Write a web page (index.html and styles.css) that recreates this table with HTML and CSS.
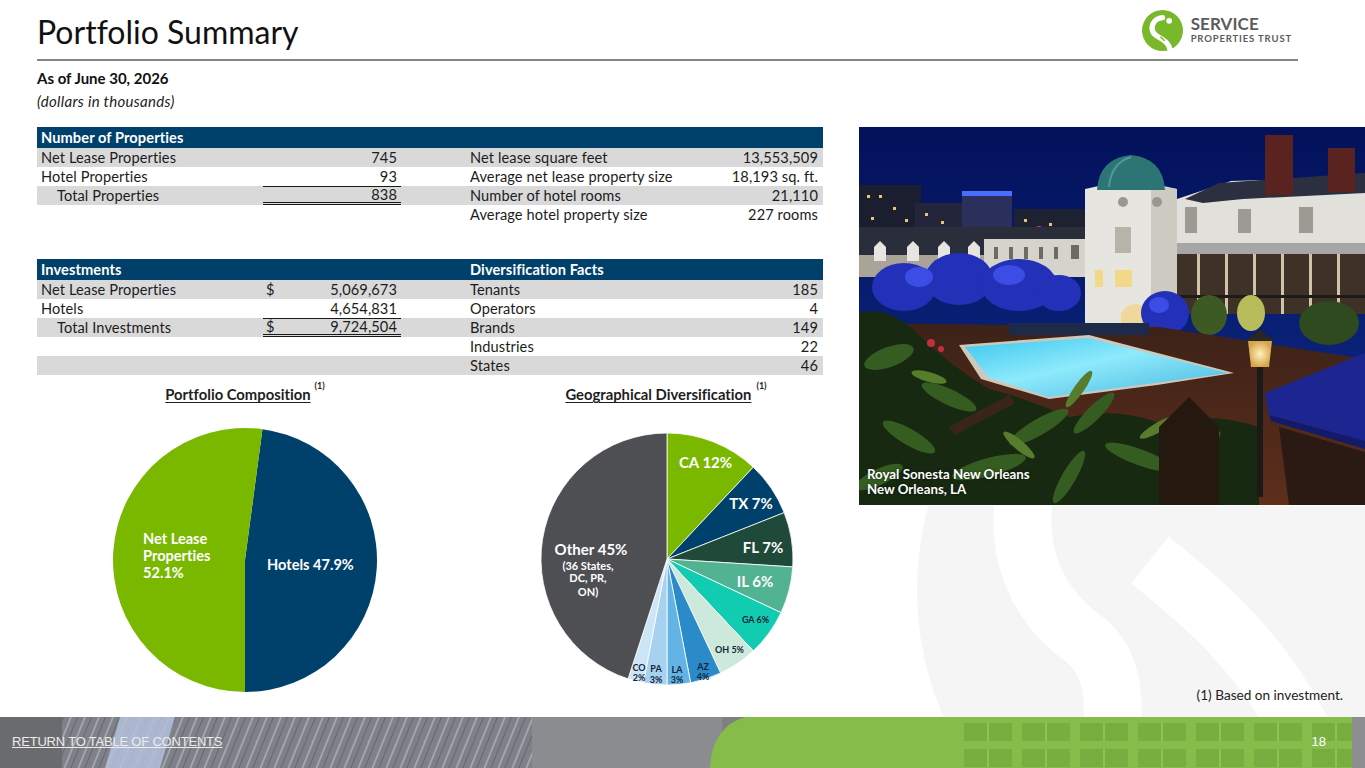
FILE: index.html
```html
<!DOCTYPE html>
<html lang="en">
<head>
<meta charset="utf-8">
<title>Portfolio Summary</title>
<link rel="stylesheet" href="styles.css">
</head>
<body>
<div class="page">
  <svg class="watermark" width="1365" height="768" viewBox="0 0 1365 768" aria-hidden="true">
    <defs>
      <clipPath id="wmclip"><rect x="0" y="506" width="1365" height="211"/></clipPath>
    </defs>
    <g clip-path="url(#wmclip)">
      <circle cx="1235" cy="590" r="318" fill="#f5f5f5"/>
      <path d="M1030 470 C1010 540 1030 600 1085 640 C1110 660 1115 690 1112 730" fill="none" stroke="#ffffff" stroke-width="58"/>
      <path d="M1150 560 C1200 600 1260 650 1300 730" fill="none" stroke="#ffffff" stroke-width="60"/>
    </g>
  </svg>

  <header class="header">
    <h1 class="title">Portfolio Summary</h1>
    <div class="logo">
      <svg class="logo-mark" width="41" height="41" viewBox="0 0 40 40" aria-hidden="true">
        <circle cx="20" cy="20" r="20" fill="#78b82a"/>
        <path d="M20 7.5 C11 8.5 8 16 11 22 C13.5 27 22 27 26 35 L28 40" fill="none" stroke="#ffffff" stroke-width="5.2" stroke-linecap="round"/>
        <circle cx="26.5" cy="10.5" r="2.8" fill="#ffffff"/>
        <path d="M18 26 L22 30" stroke="#78b82a" stroke-width="1.4"/>
      </svg>
      <div class="logo-text">
        <span class="logo-big">SERVICE</span>
        <span class="logo-small">PROPERTIES TRUST</span>
      </div>
    </div>
  </header>

  <div class="meta">
    <p class="asof">As of June 30, 2026</p>
    <p class="units">(dollars in thousands)</p>
  </div>

  <main class="main">
    <section class="left">
      <div class="table">
        <div class="row head">
          <div class="c1">Number of Properties</div><div class="c2"></div><div class="c3"></div><div class="c4"></div>
        </div>
        <div class="row grey">
          <div class="c1">Net Lease Properties</div><div class="c2 num">745</div><div class="c3"></div>
          <div class="c4"><span>Net lease square feet</span><span>13,553,509</span></div>
        </div>
        <div class="row">
          <div class="c1">Hotel Properties</div><div class="c2 num">93</div><div class="c3"></div>
          <div class="c4"><span>Average net lease property size</span><span>18,193 sq. ft.</span></div>
        </div>
        <div class="row grey total">
          <div class="c1 indent">Total Properties</div><div class="c2 num">838</div><div class="c3"></div>
          <div class="c4"><span>Number of hotel rooms</span><span>21,110</span></div>
        </div>
        <div class="row">
          <div class="c1"></div><div class="c2"></div><div class="c3"></div>
          <div class="c4"><span>Average hotel property size</span><span>227 rooms</span></div>
        </div>
      </div>

      <div class="table t2">
        <div class="row head">
          <div class="c1">Investments</div><div class="c2"></div><div class="c3"></div><div class="c4"><span>Diversification Facts</span></div>
        </div>
        <div class="row grey">
          <div class="c1">Net Lease Properties</div><div class="c2 money"><span>$</span><span>5,069,673</span></div><div class="c3"></div>
          <div class="c4"><span>Tenants</span><span>185</span></div>
        </div>
        <div class="row">
          <div class="c1">Hotels</div><div class="c2 num">4,654,831</div><div class="c3"></div>
          <div class="c4"><span>Operators</span><span>4</span></div>
        </div>
        <div class="row grey total">
          <div class="c1 indent">Total Investments</div><div class="c2 money"><span>$</span><span>9,724,504</span></div><div class="c3"></div>
          <div class="c4"><span>Brands</span><span>149</span></div>
        </div>
        <div class="row">
          <div class="c1"></div><div class="c2"></div><div class="c3"></div>
          <div class="c4"><span>Industries</span><span>22</span></div>
        </div>
        <div class="row grey">
          <div class="c1"></div><div class="c2"></div><div class="c3"></div>
          <div class="c4"><span>States</span><span>46</span></div>
        </div>
      </div>

      <div class="charts">
        <figure class="chart chart-a">
          <figcaption class="chart-title"><span class="u">Portfolio Composition</span><span class="sup">(1)</span></figcaption>
          <svg class="pie" width="416" height="280" viewBox="-208 -140 416 280">
            <path d="M0 0 L17.46 -130.84 A132 132 0 0 1 0 132 Z" fill="#00416b"/>
            <path d="M0 0 L0 132 A132 132 0 1 1 17.46 -130.84 Z" fill="#7ab800"/>
            <g class="pl">
              <text x="-102" y="-16">Net Lease</text>
              <text x="-102" y="1">Properties</text>
              <text x="-102" y="18">52.1%</text>
              <text x="22" y="9.5">Hotels 47.9%</text>
            </g>
          </svg>
        </figure>
        <figure class="chart chart-b">
          <figcaption class="chart-title"><span class="u">Geographical Diversification</span><span class="sup">(1)</span></figcaption>
          <svg class="pie" width="386" height="280" viewBox="-194 -139 386 280">
            <g stroke="#ffffff" stroke-width="0.8">
              <path d="M0 0 L0 -126 A126 126 0 0 1 86.25 -91.85 Z" fill="#7ab800"/>
              <path d="M0 0 L86.25 -91.85 A126 126 0 0 1 117.15 -46.38 Z" fill="#00416b"/>
              <path d="M0 0 L117.15 -46.38 A126 126 0 0 1 125.75 7.91 Z" fill="#1f4a39"/>
              <path d="M0 0 L125.75 7.91 A126 126 0 0 1 114.0 53.65 Z" fill="#52b392"/>
              <path d="M0 0 L114.0 53.65 A126 126 0 0 1 86.25 91.85 Z" fill="#12ccb1"/>
              <path d="M0 0 L86.25 91.85 A126 126 0 0 1 53.65 114.0 Z" fill="#cde9db"/>
              <path d="M0 0 L53.65 114.0 A126 126 0 0 1 23.61 123.77 Z" fill="#2b8bc8"/>
              <path d="M0 0 L23.61 123.77 A126 126 0 0 1 0 126 Z" fill="#63b4e4"/>
              <path d="M0 0 L0 126 A126 126 0 0 1 -23.61 123.77 Z" fill="#a7d2ef"/>
              <path d="M0 0 L-23.61 123.77 A126 126 0 0 1 -38.93 119.84 Z" fill="#cde6f6"/>
              <path d="M0 0 L-38.93 119.84 A126 126 0 0 1 0 -126 Z" fill="#4e4f53"/>
            </g>
            <g class="gl-big">
              <text x="38.5" y="-91">CA 12%</text>
              <text x="84" y="-50">TX 7%</text>
              <text x="96" y="-6">FL 7%</text>
              <text x="88" y="28">IL 6%</text>
              <text x="-76" y="-4">Other 45%</text>
            </g>
            <g class="gl-mid">
              <text x="-79" y="11">(36 States,</text>
              <text x="-79" y="23">DC, PR,</text>
              <text x="-79" y="37">ON)</text>
            </g>
            <g class="gl-small">
              <text x="88.5" y="64">GA 6%</text>
              <text x="62.5" y="94">OH 5%</text>
              <text x="36" y="111">AZ</text><text x="36" y="121">4%</text>
              <text x="10" y="114">LA</text><text x="10" y="124">3%</text>
              <text x="-11" y="113">PA</text><text x="-11" y="124">3%</text>
              <text x="-28" y="112">CO</text><text x="-28" y="122">2%</text>
            </g>
          </svg>
        </figure>
      </div>
    </section>

    <aside class="right">
      <div class="photo">
        <svg class="photo-img" width="506" height="378" viewBox="0 0 506 378" aria-hidden="true">
          <defs>
            <linearGradient id="sky" x1="0" y1="0" x2="0" y2="1">
              <stop offset="0" stop-color="#03115a"/>
              <stop offset="1" stop-color="#0e2c8a"/>
            </linearGradient>
            <linearGradient id="pool" x1="0" y1="0" x2="1" y2="1">
              <stop offset="0" stop-color="#3cc6ee"/>
              <stop offset=".45" stop-color="#8eeafc"/>
              <stop offset="1" stop-color="#45b4dc"/>
            </linearGradient>
            <linearGradient id="deck" x1="0" y1="0" x2="0" y2="1">
              <stop offset="0" stop-color="#3c2218"/>
              <stop offset="1" stop-color="#5e2e1a"/>
            </linearGradient>
            <radialGradient id="lamp" cx=".5" cy=".5" r=".5">
              <stop offset="0" stop-color="#fff2c0"/>
              <stop offset="1" stop-color="#d7a64a"/>
            </radialGradient>
          </defs>
          <rect width="506" height="378" fill="url(#sky)"/>
          <!-- city skyline -->
          <rect x="0" y="58" width="62" height="52" fill="#1b1e2e"/>
          <rect x="56" y="76" width="50" height="34" fill="#23263a"/>
          <rect x="103" y="67" width="50" height="43" fill="#2a2f5c"/>
          <rect x="103" y="64" width="50" height="5" fill="#4a6cff"/>
          <rect x="155" y="82" width="72" height="28" fill="#1d2132"/>
          <g fill="#e8c46a">
            <rect x="8" y="68" width="3" height="3"/><rect x="20" y="68" width="3" height="3"/><rect x="34" y="80" width="3" height="3"/>
            <rect x="12" y="90" width="3" height="3"/><rect x="46" y="92" width="3" height="3"/><rect x="66" y="86" width="3" height="3"/>
            <rect x="82" y="94" width="3" height="3"/><rect x="165" y="92" width="3" height="3"/><rect x="190" y="96" width="3" height="3"/>
          </g>
          <circle cx="180" cy="104" r="5" fill="#d0307a"/>
          <!-- left mansard building -->
          <rect x="0" y="100" width="232" height="32" fill="#2a2d3a"/>
          <rect x="0" y="128" width="232" height="22" fill="#a9a398"/>
          <g fill="#e7e5e1">
            <path d="M15 134 L15 120 L21 114 L27 120 L27 134 Z"/>
            <path d="M48 134 L48 120 L54 114 L60 120 L60 134 Z"/>
            <path d="M79 134 L79 120 L85 114 L91 120 L91 134 Z"/>
            <path d="M109 134 L109 120 L115 114 L121 120 L121 134 Z"/>
          </g>
          <rect x="125" y="112" width="107" height="38" fill="#d6d3cc"/>
          <g fill="#6f6a63">
            <rect x="135" y="120" width="4" height="12"/><rect x="150" y="120" width="4" height="12"/><rect x="165" y="120" width="4" height="12"/>
            <rect x="180" y="120" width="4" height="12"/><rect x="195" y="120" width="4" height="12"/><rect x="212" y="118" width="8" height="14"/>
          </g>
          <!-- right building -->
          <path d="M318 72 L372 54 L506 50 L506 134 L318 134 Z" fill="#e2e0da"/>
          <path d="M326 72 L360 56 L506 46 L506 66 L384 72 L344 76 Z" fill="#2b2f40"/>
          <rect x="406" y="8" width="28" height="60" fill="#5a2320"/>
          <rect x="469" y="21" width="27" height="44" fill="#5a2320"/>
          <g fill="#9d9a94">
            <rect x="326" y="80" width="12" height="26"/><rect x="379" y="82" width="13" height="24"/><rect x="440" y="80" width="14" height="26"/>
          </g>
          <rect x="300" y="116" width="206" height="11" fill="#a6a5a7"/>
          <rect x="300" y="127" width="206" height="60" fill="#3e3228"/>
          <g fill="#cfc3aa">
            <rect x="310" y="127" width="3" height="60"/><rect x="338" y="127" width="3" height="60"/><rect x="366" y="127" width="3" height="60"/>
            <rect x="394" y="127" width="3" height="60"/><rect x="422" y="127" width="3" height="60"/><rect x="450" y="127" width="3" height="60"/><rect x="478" y="127" width="3" height="60"/>
          </g>
          <rect x="300" y="168" width="206" height="3" fill="#1e1a18"/>
          <!-- tower -->
          <path d="M226 62 Q272 50 318 62 L318 206 L226 206 Z" fill="#e7e5df"/>
          <path d="M292 58 Q306 60 318 62 L318 206 L292 206 Z" fill="#cdcac2"/>
          <path d="M238 63 Q240 31 272 28 Q304 31 306 63 Z" fill="#2d7574"/>
          <path d="M250 60 Q252 36 272 30" fill="none" stroke="#4f9a98" stroke-width="2"/>
          <circle cx="264" cy="75" r="5" fill="#9a978f"/>
          <circle cx="298" cy="75" r="5" fill="#9a978f"/>
          <rect x="256" y="100" width="16" height="26" fill="#b8b4aa"/>
          <rect x="236" y="143" width="8" height="17" fill="#f2d889"/>
          <rect x="256" y="143" width="17" height="17" fill="#f2d889"/>
          <path d="M262 206 L262 186 Q276 168 292 186 L292 206 Z" fill="#f0d79b"/>
          <!-- blue lit trees -->
          <g fill="#2330b8">
            <ellipse cx="45" cy="160" rx="32" ry="24"/>
            <ellipse cx="100" cy="152" rx="34" ry="26"/>
            <ellipse cx="160" cy="158" rx="38" ry="26"/>
            <ellipse cx="200" cy="166" rx="22" ry="18"/>
            <ellipse cx="306" cy="186" rx="24" ry="22"/>
          </g>
          <g fill="#3c4de6">
            <ellipse cx="60" cy="150" rx="14" ry="10"/>
            <ellipse cx="150" cy="148" rx="16" ry="10"/>
            <ellipse cx="300" cy="178" rx="10" ry="8"/>
          </g>
          <ellipse cx="392" cy="186" rx="14" ry="18" fill="#b8bc5a"/>
          <ellipse cx="350" cy="188" rx="18" ry="20" fill="#3e5a24"/>
          <ellipse cx="470" cy="196" rx="30" ry="22" fill="#2e4a1e"/>
          <!-- deck -->
          <path d="M0 196 L300 200 L506 232 L506 378 L0 378 Z" fill="url(#deck)"/>
          <rect x="150" y="196" width="140" height="12" fill="#1d2a4a"/>
          <!-- pool -->
          <path d="M100 218 L230 208 L375 246 L298 258 L190 272 L122 252 Z" fill="#cfc8ba"/>
          <path d="M106 220 L229 211 L369 246 L296 256 L189 270 L129 250 Z" fill="url(#pool)"/>
          <!-- foreground plants -->
          <path d="M0 186 Q30 178 60 208 Q90 238 130 262 Q170 272 210 290 Q260 280 300 296 Q350 284 400 300 L400 378 L0 378 Z" fill="#172a11"/>
          <g fill="#355d22">
            <ellipse cx="30" cy="230" rx="26" ry="10" transform="rotate(-20 30 230)"/>
            <ellipse cx="90" cy="270" rx="30" ry="8" transform="rotate(25 90 270)"/>
            <ellipse cx="180" cy="300" rx="34" ry="8" transform="rotate(-30 180 300)"/>
            <ellipse cx="235" cy="286" rx="28" ry="7" transform="rotate(-45 235 286)"/>
            <ellipse cx="280" cy="330" rx="36" ry="8" transform="rotate(20 280 330)"/>
            <ellipse cx="130" cy="340" rx="38" ry="9" transform="rotate(-15 130 340)"/>
            <ellipse cx="340" cy="320" rx="26" ry="7" transform="rotate(-35 340 320)"/>
            <ellipse cx="50" cy="310" rx="30" ry="8" transform="rotate(30 50 310)"/>
            <ellipse cx="210" cy="350" rx="30" ry="7" transform="rotate(-60 210 350)"/>
            <ellipse cx="20" cy="350" rx="26" ry="8" transform="rotate(-25 20 350)"/>
          </g>
          <g fill="#567c2c">
            <ellipse cx="220" cy="262" rx="22" ry="5" transform="rotate(-55 220 262)"/>
            <ellipse cx="300" cy="300" rx="22" ry="5" transform="rotate(-30 300 300)"/>
            <ellipse cx="70" cy="250" rx="18" ry="5" transform="rotate(15 70 250)"/>
            <ellipse cx="160" cy="318" rx="20" ry="5" transform="rotate(40 160 318)"/>
          </g>
          <circle cx="72" cy="216" r="4" fill="#c0303a"/>
          <circle cx="82" cy="222" r="3" fill="#c0303a"/>
          <path d="M90 300 L150 268 L156 276 L96 308 Z" fill="#3a2618"/>
          <path d="M300 300 L330 270 L360 300 L360 378 L300 378 Z" fill="#24180f"/>
          <!-- awning -->
          <path d="M406 266 L506 226 L506 314 L410 288 Z" fill="#1c2590"/>
          <path d="M410 288 L506 314 L506 322 L412 294 Z" fill="#121a6a"/>
          <path d="M420 300 L506 325 L506 378 L430 378 Z" fill="#2b1a14"/>
          <!-- lamp -->
          <rect x="398" y="240" width="6" height="130" fill="#1c1a18"/>
          <path d="M389 214 L413 214 L410 240 L392 240 Z" fill="url(#lamp)"/>
          <path d="M386 214 L401 203 L416 214 Z" fill="#2a2622"/>
        </svg>
        <p class="caption">Royal Sonesta New Orleans<br>New Orleans, LA</p>
      </div>
      <p class="footnote">(1) Based on investment.</p>
    </aside>
  </main>

  <footer class="footer">
    <svg class="footer-bg" width="1365" height="51" viewBox="0 0 1365 51" aria-hidden="true">
      <defs>
        <pattern id="glass" width="14" height="51" patternUnits="userSpaceOnUse" patternTransform="skewX(-22)">
          <rect width="14" height="51" fill="#7e8187"/>
          <rect x="0" width="2" height="51" fill="#a2a6ae"/>
          <rect x="7" width="1" height="51" fill="#63666c"/>
        </pattern>
        <pattern id="greenwin" width="58" height="26" patternUnits="userSpaceOnUse" x="960" y="2">
          <rect width="58" height="26" fill="#86bc4a"/>
          <rect x="4" y="4" width="48" height="18" fill="#78ae40"/>
          <rect x="27" y="4" width="2" height="18" fill="#8ec354"/>
        </pattern>
      </defs>
      <rect width="1365" height="51" fill="#7e8084"/>
      <rect x="0" width="62" height="51" fill="#6a6b6e"/>
      <rect x="62" width="470" height="51" fill="url(#glass)"/>
      <path d="M120 0 L175 0 L160 51 L105 51 Z" fill="#b3bfdc" opacity=".85"/>
      <rect x="532" width="190" height="51" fill="#8a8c90"/>
      <path d="M745 0 L1352 0 L1352 51 L710 51 Q712 10 745 0 Z" fill="#86bc4a"/>
      <rect x="960" y="0" width="392" height="51" fill="url(#greenwin)"/>
      <rect x="1352" width="13" height="51" fill="#8c8e91"/>
    </svg>
    <a class="toc" href="#">RETURN TO TABLE OF CONTENTS</a>
    <span class="pageno">18</span>
  </footer>
</div>
</body>
</html>
```

FILE: styles.css
```css
* { box-sizing: border-box; margin: 0; padding: 0; }

body {
  margin: 0;
  font-family: Lato, "Open Sans", sans-serif;
  font-variant-ligatures: none;
  color: #1e1e1e;
  background: #ffffff;
}

.page {
  width: 1365px;
  height: 768px;
  position: relative;
  z-index: 0;
  overflow: hidden;
  background: #ffffff;
  display: flex;
  flex-direction: column;
}

.watermark {
  position: absolute;
  left: 0;
  top: 0;
  z-index: -1;
}

/* header */
.header {
  display: flex;
  justify-content: space-between;
  align-items: flex-start;
  height: 61px;
  margin: 0 67px 0 37px;
  border-bottom: 2px solid #858585;
  flex: none;
}

.title {
  font-size: 32px;
  font-weight: 400;
  line-height: 36px;
  padding-top: 14px;
  color: #111111;
}

.logo {
  display: flex;
  align-items: flex-start;
  gap: 8px;
  margin-top: 10px;
  margin-right: 6px;
}

.logo-mark { display: block; }

.logo-text {
  display: flex;
  flex-direction: column;
  padding-top: 6px;
  color: #5c5c5c;
  font-weight: 700;
}

.logo-big {
  font-size: 17px;
  line-height: 16px;
  letter-spacing: 0.1px;
}

.logo-small {
  font-size: 9.5px;
  line-height: 11px;
  letter-spacing: 0.85px;
  margin-top: 1px;
}

/* meta */
.meta {
  padding-left: 37px;
  flex: none;
}

.asof {
  margin-top: 6px;
  font-size: 15px;
  font-weight: 700;
  line-height: 22px;
  color: #111111;
}

.units {
  margin-top: 1px;
  font-size: 15px;
  font-style: italic;
  line-height: 22px;
  letter-spacing: 0.3px;
  color: #222222;
}

/* main */
.main {
  display: grid;
  grid-template-columns: 822px 506px;
  padding-left: 37px;
  margin-top: 15px;
  flex: none;
}

.table { width: 786px; }
.t2 { margin-top: 35px; }

.row {
  display: grid;
  grid-template-columns: 226px 138px 69px 1fr;
  height: 19px;
  line-height: 19px;
  font-size: 14.6px;
  letter-spacing: 0.1px;
  color: #1c1c1c;
}

.row.grey { background: #d9d9d9; }

.row.head {
  height: 21px;
  line-height: 21px;
  background: #00416b;
  color: #ffffff;
  font-weight: 700;
}

.c1 { padding-left: 4px; white-space: nowrap; }
.c1.indent { padding-left: 20px; }

.c2 {
  display: flex;
  justify-content: flex-end;
  padding: 0 4px 0 3px;
}

.c2.money { justify-content: space-between; }

.total .c2 {
  border-top: 1px solid #1a1a1a;
  border-bottom: 3px double #1a1a1a;
  line-height: 15px;
}

.c4 {
  display: flex;
  justify-content: space-between;
  padding-right: 5px;
  white-space: nowrap;
}

/* charts */
.charts {
  display: flex;
  margin-top: 9px;
}

.chart { display: block; }
.chart-a { width: 416px; }
.chart-b { width: 386px; margin-left: 20px; }

.chart-title {
  text-align: center;
  font-size: 14.8px;
  font-weight: 700;
  line-height: 20px;
  color: #1e1e1e;
  white-space: nowrap;
}

.chart-title .u { text-decoration: underline; text-underline-offset: 2px; }

.chart-title .sup {
  font-size: 9px;
  vertical-align: 11px;
  margin-left: 4px;
  line-height: 0;
}

.chart-b .chart-title .sup { margin-left: 5px; }

.pie {
  display: block;
  margin-top: 16px;
  overflow: visible;
}

.pl text {
  fill: #ffffff;
  font-family: Lato, "Open Sans", sans-serif;
  font-size: 14.6px;
  font-weight: 700;
}

.gl-big text {
  fill: #ffffff;
  font-family: Lato, "Open Sans", sans-serif;
  font-size: 15px;
  font-weight: 700;
  text-anchor: middle;
}

.gl-mid text {
  fill: #ffffff;
  font-family: Lato, "Open Sans", sans-serif;
  font-size: 11px;
  font-weight: 700;
  text-anchor: middle;
}

.gl-small text {
  fill: #14253a;
  font-family: Lato, "Open Sans", sans-serif;
  font-size: 9px;
  font-weight: 700;
  text-anchor: middle;
}

/* right column */
.right {
  display: flex;
  flex-direction: column;
}

.photo {
  position: relative;
  width: 506px;
  height: 378px;
}

.photo-img { display: block; }

.caption {
  position: absolute;
  left: 8px;
  bottom: 8px;
  color: #ffffff;
  font-size: 13.3px;
  font-weight: 700;
  line-height: 15px;
  text-shadow: 0 0 3px rgba(0, 0, 0, 0.6);
}

.footnote {
  margin-top: 180px;
  padding-right: 22px;
  text-align: right;
  font-size: 13.6px;
  line-height: 20px;
  color: #222222;
}

/* footer */
.footer {
  position: relative;
  margin-top: auto;
  height: 51px;
  flex: none;
  display: flex;
  justify-content: space-between;
  align-items: flex-start;
  padding: 17px 39px 0 12px;
  font-family: "Liberation Sans Narrow", "Liberation Sans", sans-serif;
  font-size: 13px;
  line-height: 16px;
}

.footer-bg {
  position: absolute;
  left: 0;
  top: 0;
  z-index: 0;
}

.toc {
  position: relative;
  color: #ececec;
  text-decoration: underline;
  letter-spacing: -0.2px;
}

.pageno {
  position: relative;
  color: #ffffff;
}
```
